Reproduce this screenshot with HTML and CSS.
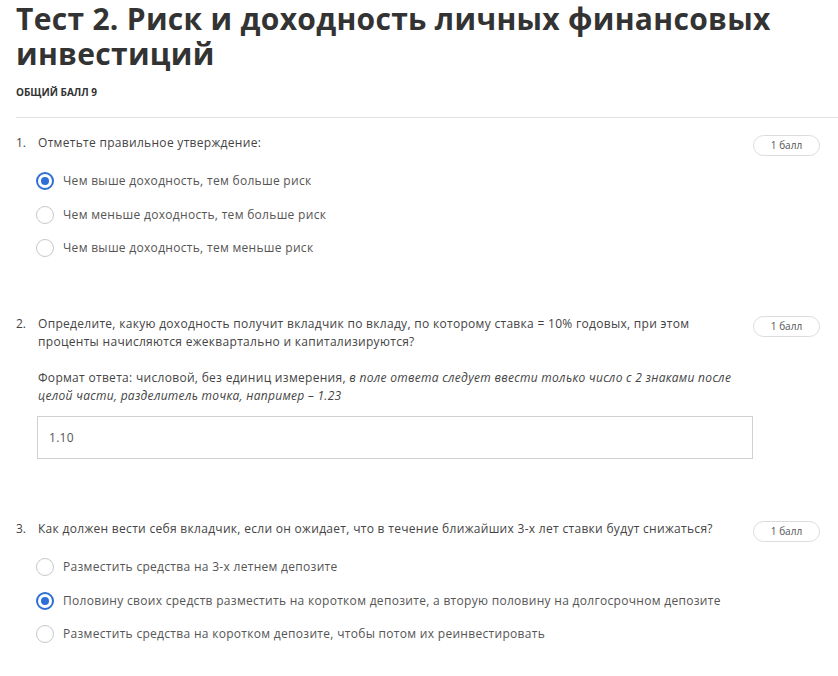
FILE: index.html
```html
<!DOCTYPE html>
<html lang="ru">
<head>
<meta charset="utf-8">
<link rel="stylesheet" href="styles.css">
</head>
<body>
<div class="page">
  <h1 class="title">Тест 2. Риск и доходность личных финансовых инвестиций</h1>
  <div class="total">ОБЩИЙ БАЛЛ 9</div>
  <hr class="sep">

  <div class="question q1">
    <div class="q-head">
      <span class="num">1.</span>
      <div class="q-text">Отметьте правильное утверждение:</div>
      <span class="badge">1 балл</span>
    </div>
    <div class="options">
      <div class="opt"><span class="radio checked"></span><span>Чем выше доходность, тем больше риск</span></div>
      <div class="opt"><span class="radio"></span><span>Чем меньше доходность, тем больше риск</span></div>
      <div class="opt"><span class="radio"></span><span>Чем выше доходность, тем меньше риск</span></div>
    </div>
  </div>

  <div class="question q2">
    <div class="q-head">
      <span class="num">2.</span>
      <div class="q-text">
        <div>Определите, какую доходность получит вкладчик по вкладу, по которому ставка = 10% годовых, при этом проценты начисляются ежеквартально и капитализируются?</div>
        <div class="format">Формат ответа: числовой, без единиц измерения, <em>в поле ответа следует ввести только число с 2 знаками после целой части, разделитель точка, например – 1.23</em></div>
      </div>
      <span class="badge">1 балл</span>
    </div>
    <div class="answer">1.10</div>
  </div>

  <div class="question q3">
    <div class="q-head">
      <span class="num">3.</span>
      <div class="q-text">Как должен вести себя вкладчик, если он ожидает, что в течение ближайших 3-х лет ставки будут снижаться?</div>
      <span class="badge">1 балл</span>
    </div>
    <div class="options">
      <div class="opt"><span class="radio"></span><span>Разместить средства на 3-х летнем депозите</span></div>
      <div class="opt"><span class="radio checked"></span><span>Половину своих средств разместить на коротком депозите, а вторую половину на долгосрочном депозите</span></div>
      <div class="opt"><span class="radio"></span><span>Разместить средства на коротком депозите, чтобы потом их реинвестировать</span></div>
    </div>
  </div>
</div>
</body>
</html>
```

FILE: styles.css
```css
html, body {
  margin: 0;
  padding: 0;
  background: #fff;
}
body {
  font-family: "Open Sans", "Liberation Sans", sans-serif;
  color: #444;
}
.page {
  padding: 0 0 0 16px;
}
.title {
  margin: 0;
  padding-top: 1px;
  font-size: 30px;
  line-height: 35px;
  font-weight: 700;
  letter-spacing: 0.3px;
  color: #333;
}
.total {
  margin-top: 14px;
  font-size: 10px;
  font-weight: 700;
  color: #333;
  line-height: 14px;
}
.sep {
  margin: 18px 0 0 0;
  border: 0;
  border-top: 1px solid #e2e2e2;
  height: 0;
}
.question {
  margin-right: 18px;
}
.q-head {
  display: flex;
  align-items: flex-start;
  font-size: 12px;
  line-height: 18px;
  letter-spacing: 0.3px;
}
.num {
  width: 22px;
  flex: none;
  letter-spacing: 0;
}
.q-text {
  flex: 1;
  color: #444;
  padding-right: 20px;
}
.badge {
  flex: none;
  width: 67px;
  height: 21px;
  box-sizing: border-box;
  border: 1px solid #dcdcdc;
  border-radius: 11px;
  font-size: 10px;
  line-height: 19px;
  letter-spacing: 0;
  text-align: center;
  color: #555;
  margin-top: 1px;
  margin-bottom: -4px;
}
.q1 { margin-top: 16px; }
.q2 { margin-top: 58px; }
.q3 { margin-top: 61px; }
.options {
  margin-top: 20px;
  display: flex;
  flex-direction: column;
  gap: 15.5px;
  padding-left: 20px;
}
.opt {
  display: flex;
  align-items: center;
  font-size: 12px;
  line-height: 18px;
  letter-spacing: 0.3px;
  color: #555;
}
.radio {
  width: 18px;
  height: 18px;
  box-sizing: border-box;
  border: 1.5px solid #c8c8c8;
  border-radius: 50%;
  margin-right: 9px;
  flex: none;
  position: relative;
}
.radio.checked {
  border: 2px solid #2d6fd4;
}
.radio.checked::after {
  content: "";
  position: absolute;
  left: 3px;
  top: 3px;
  width: 8px;
  height: 8px;
  border-radius: 50%;
  background: #2d6fd4;
}
.format {
  margin-top: 18px;
}
.format em {
  font-style: italic;
}
.answer {
  margin: 11px 0 0 21px;
  width: 716px;
  height: 43px;
  box-sizing: border-box;
  border: 1px solid #cfcfd4;
  padding: 0 11px;
  font-size: 12px;
  line-height: 41px;
  letter-spacing: 0.3px;
  color: #555;
}
```
